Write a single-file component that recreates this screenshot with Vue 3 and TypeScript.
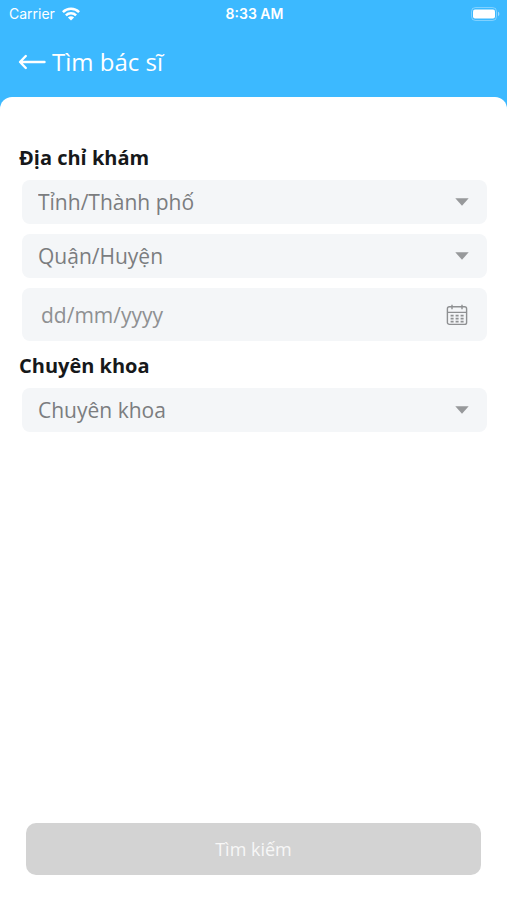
<script setup lang="ts">
import { computed, ref } from 'vue'

const province = ref<string>('')
const district = ref<string>('')
const date = ref<string>('')
const specialty = ref<string>('')

const provinces: string[] = ['Hà Nội', 'Đà Nẵng', 'Hồ Chí Minh']
const districts: string[] = ['Quận 1', 'Quận 3', 'Quận 5']
const specialties: string[] = ['Nội khoa', 'Nhi khoa', 'Da liễu']

const dateInput = ref<HTMLInputElement | null>(null)
const ready = computed(() => Boolean(province.value && district.value && date.value && specialty.value))
</script>

<template>
  <div class="screen">
    <div class="status">
      <div class="carrier">
        <span>Carrier</span>
        <svg width="18" height="14" viewBox="0 0 18 14" aria-hidden="true">
          <g fill="none" stroke="#fff" stroke-width="2.5">
            <path d="M0.9 5.2C5.4 0.7 12.6 0.7 17.1 5.2" />
            <path d="M3.9 8.3C6.7 5.5 11.3 5.5 14.1 8.3" />
          </g>
          <path d="M9 13.6L5.9 10.5C7.6 8.9 10.4 8.9 12.1 10.5Z" fill="#fff" />
        </svg>
      </div>
      <span class="time">8:33 AM</span>
      <svg class="battery" width="30" height="14" viewBox="0 0 30 14" aria-hidden="true">
        <rect x="1.5" y="0.5" width="25" height="13" rx="4" fill="none" stroke="#fff" stroke-opacity="0.35" />
        <rect x="3" y="2.5" width="22" height="9" rx="2" fill="#fff" />
        <path d="M28 4.8C29.8 5.4 29.8 8.6 28 9.2Z" fill="#fff" fill-opacity="0.5" />
      </svg>
    </div>

    <header class="header">
      <button class="back" type="button" aria-label="Quay lại">
        <svg width="28" height="16" viewBox="0 0 28 16" aria-hidden="true">
          <path d="M7.8 2L2 8L7.8 14M2.2 8H26.5" fill="none" stroke="#fff" stroke-width="2.4" stroke-linecap="round" stroke-linejoin="round" />
        </svg>
      </button>
      <h1>Tìm bác sĩ</h1>
    </header>

    <form class="sheet" @submit.prevent>
      <label class="label" for="province">Địa chỉ khám</label>
      <div class="fields">
        <div class="field">
          <select id="province" v-model="province">
            <option value="">Tỉnh/Thành phố</option>
            <option v-for="item in provinces" :key="item">{{ item }}</option>
          </select>
          <svg class="caret" width="14" height="8" viewBox="0 0 14 8" aria-hidden="true"><path d="M0.3 0.3H13.7L7 7.8Z" fill="#97999b" /></svg>
        </div>
        <div class="field">
          <select v-model="district" aria-label="Quận/Huyện">
            <option value="">Quận/Huyện</option>
            <option v-for="item in districts" :key="item">{{ item }}</option>
          </select>
          <svg class="caret" width="14" height="8" viewBox="0 0 14 8" aria-hidden="true"><path d="M0.3 0.3H13.7L7 7.8Z" fill="#97999b" /></svg>
        </div>
        <div class="field date">
          <input ref="dateInput" v-model="date" type="text" placeholder="dd/mm/yyyy" aria-label="Ngày khám" />
          <button class="calendar" type="button" aria-label="Chọn ngày" @click="dateInput?.focus()">
            <svg width="22" height="22" viewBox="0 0 22 22" aria-hidden="true">
              <g fill="none" stroke="#8e9092" stroke-width="1.4">
                <rect x="1.4" y="2.8" width="19.2" height="17.6" rx="2" />
                <path d="M1.4 8.4H20.6M6 0.8V5.2M16 0.8V5.2" />
                <path d="M4.6 11.6H17.6M4.6 14.6H17.6M4.6 17.6H17.6" stroke-width="1.7" stroke-dasharray="3 2" />
              </g>
            </svg>
          </button>
        </div>
      </div>

      <label class="label second" for="specialty">Chuyên khoa</label>
      <div class="fields">
        <div class="field">
          <select id="specialty" v-model="specialty">
            <option value="">Chuyên khoa</option>
            <option v-for="item in specialties" :key="item">{{ item }}</option>
          </select>
          <svg class="caret" width="14" height="8" viewBox="0 0 14 8" aria-hidden="true"><path d="M0.3 0.3H13.7L7 7.8Z" fill="#97999b" /></svg>
        </div>
      </div>

      <button class="submit" type="submit" :disabled="!ready">Tìm kiếm</button>
    </form>
  </div>
</template>

<style>
body {
  background: #fff;
}
</style>

<style scoped>
.screen {
  display: flex;
  flex-direction: column;
  min-height: 100vh;
  background: #3cb9ff;
  color: #fff;
  font-family: "Open Sans", "Noto Sans", sans-serif;
}

.screen *,
.screen {
  box-sizing: border-box;
}

.status {
  display: grid;
  grid-template-columns: 1fr auto 1fr;
  align-items: center;
  height: 27px;
  padding: 0 7px 0 9px;
  font-family: Inter, sans-serif;
  font-size: 14px;
}

.carrier {
  display: flex;
  align-items: center;
  gap: 7px;
}

.time {
  font-weight: 600;
}

.battery {
  justify-self: end;
}

.header {
  display: flex;
  align-items: center;
  gap: 6px;
  height: 70px;
  padding: 0 18px;
}

button {
  border: 0;
  padding: 0;
  background: none;
  font-family: inherit;
}

.back,
.calendar {
  display: flex;
  cursor: pointer;
}

h1 {
  margin: 0;
  font-size: 24px;
  font-weight: 400;
  line-height: 32px;
}

.sheet {
  display: flex;
  flex: 1;
  flex-direction: column;
  padding: 47px 20px 25px 19px;
  border-radius: 12px 12px 0 0;
  background: #fff;
}

.label {
  color: #16181a;
  font-size: 20px;
  font-weight: 700;
  line-height: 28px;
}

.second {
  margin-top: 11px;
}

.fields {
  display: flex;
  flex-direction: column;
  gap: 10px;
  margin: 8px 0 0 3px;
}

.field {
  display: grid;
  grid-template-columns: 1fr auto;
  align-items: center;
  height: 44px;
  border-radius: 8px;
  background: #f4f6f8;
}

.field select,
.field input {
  width: 100%;
  height: 100%;
  margin: 0;
  padding: 0 16px;
  border: 0;
  border-radius: 8px;
  appearance: none;
  background: transparent;
  color: #7b7d7f;
  font-family: inherit;
  font-size: 21px;
}

.field select {
  grid-area: 1 / 1 / 2 / 3;
}

.caret {
  grid-area: 1 / 2;
  margin-right: 18px;
  pointer-events: none;
}

.date {
  height: 53px;
}

.field input {
  padding-left: 19px;
}

.field input::placeholder {
  color: #8e9092;
  opacity: 1;
}

.calendar {
  margin-right: 19px;
}

.submit {
  height: 52px;
  margin: auto 6px 0 7px;
  border-radius: 10px;
  background: #d3d3d3;
  color: #f7f7f7;
  font-size: 18px;
}
</style>
